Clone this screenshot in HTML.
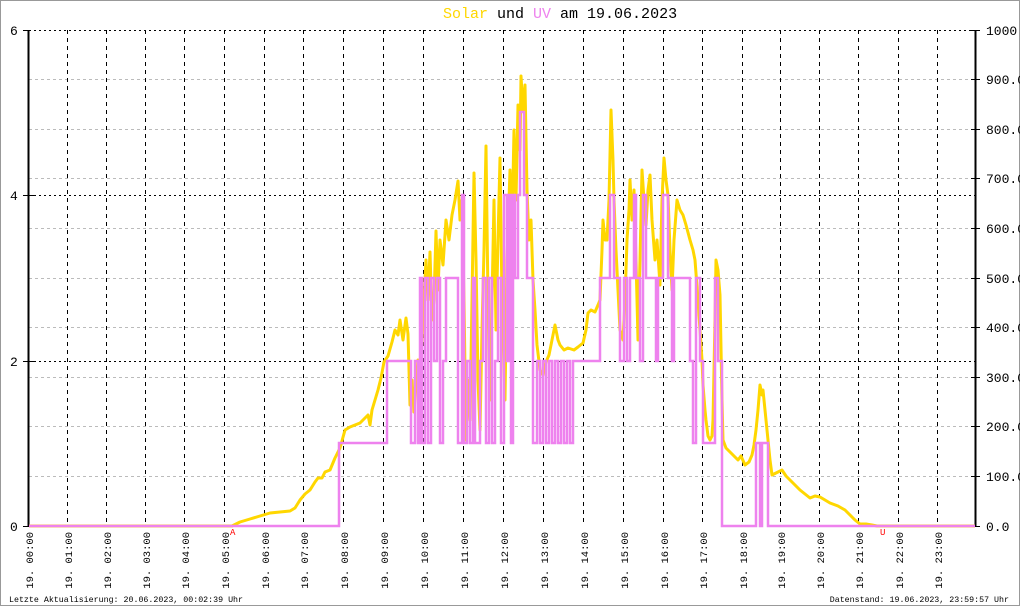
<!DOCTYPE html>
<html><head><meta charset="utf-8"><style>
html,body{margin:0;padding:0;background:#fff;}
svg{display:block;}
text{font-family:"Liberation Mono","DejaVu Sans Mono",monospace;}
</style></head><body>
<svg width="1020" height="606" viewBox="0 0 1020 606" xmlns="http://www.w3.org/2000/svg">
<rect x="0.5" y="0.5" width="1019" height="605" fill="#fff" stroke="#999"/>
<text x="443" y="18" font-size="15"><tspan fill="#ffd700">Solar</tspan><tspan fill="#000"> und </tspan><tspan fill="#ee82ee">UV</tspan><tspan fill="#000"> am 19.06.2023</tspan></text>
<g stroke="#bbb" stroke-width="1" stroke-dasharray="3,3">
<line x1="29" x2="975" y1="476.5" y2="476.5"/><line x1="29" x2="975" y1="426.5" y2="426.5"/>
<line x1="29" x2="975" y1="377.5" y2="377.5"/><line x1="29" x2="975" y1="327.5" y2="327.5"/>
<line x1="29" x2="975" y1="278.5" y2="278.5"/><line x1="29" x2="975" y1="228.5" y2="228.5"/>
<line x1="29" x2="975" y1="178.5" y2="178.5"/><line x1="29" x2="975" y1="129.5" y2="129.5"/>
<line x1="29" x2="975" y1="79.5" y2="79.5"/>
</g>
<g stroke="#000" stroke-width="1" stroke-dasharray="2,3">
<line x1="29" x2="975" y1="30.5" y2="30.5"/><line x1="29" x2="975" y1="195.5" y2="195.5"/><line x1="29" x2="975" y1="361.5" y2="361.5"/>
</g>
<g stroke="#000" stroke-width="1" stroke-dasharray="4,4" id="vg"></g>
<g stroke="#000" stroke-width="1" stroke-dasharray="4,4">
<line x1="67.5" x2="67.5" y1="30" y2="526"/><line x1="106.5" x2="106.5" y1="30" y2="526"/><line x1="145.5" x2="145.5" y1="30" y2="526"/><line x1="184.5" x2="184.5" y1="30" y2="526"/><line x1="224.5" x2="224.5" y1="30" y2="526"/><line x1="264.5" x2="264.5" y1="30" y2="526"/><line x1="303.5" x2="303.5" y1="30" y2="526"/><line x1="343.5" x2="343.5" y1="30" y2="526"/><line x1="383.5" x2="383.5" y1="30" y2="526"/><line x1="423.5" x2="423.5" y1="30" y2="526"/><line x1="463.5" x2="463.5" y1="30" y2="526"/><line x1="503.5" x2="503.5" y1="30" y2="526"/><line x1="543.5" x2="543.5" y1="30" y2="526"/><line x1="583.5" x2="583.5" y1="30" y2="526"/><line x1="623.5" x2="623.5" y1="30" y2="526"/><line x1="663.5" x2="663.5" y1="30" y2="526"/><line x1="702.5" x2="702.5" y1="30" y2="526"/><line x1="742.5" x2="742.5" y1="30" y2="526"/><line x1="780.5" x2="780.5" y1="30" y2="526"/><line x1="819.5" x2="819.5" y1="30" y2="526"/><line x1="858.5" x2="858.5" y1="30" y2="526"/><line x1="898.5" x2="898.5" y1="30" y2="526"/><line x1="937.5" x2="937.5" y1="30" y2="526"/>
</g>
<g stroke="#000" stroke-width="2">
<line x1="28.5" x2="28.5" y1="30" y2="527"/><line x1="975.5" x2="975.5" y1="30" y2="527"/>
</g>
<g stroke="#000" stroke-width="1">
<line x1="23" x2="29" y1="30.5" y2="30.5"/><line x1="23" x2="34" y1="195.5" y2="195.5"/><line x1="23" x2="34" y1="361.5" y2="361.5"/><line x1="23" x2="29" y1="526.5" y2="526.5"/>
<line x1="971" x2="980" y1="30.5" y2="30.5"/><line x1="971" x2="980" y1="79.5" y2="79.5"/><line x1="971" x2="980" y1="129.5" y2="129.5"/><line x1="971" x2="980" y1="178.5" y2="178.5"/><line x1="971" x2="980" y1="228.5" y2="228.5"/><line x1="971" x2="980" y1="278.5" y2="278.5"/><line x1="971" x2="980" y1="327.5" y2="327.5"/><line x1="971" x2="980" y1="377.5" y2="377.5"/><line x1="971" x2="980" y1="426.5" y2="426.5"/><line x1="971" x2="980" y1="476.5" y2="476.5"/><line x1="971" x2="980" y1="526.5" y2="526.5"/>
</g>
<g font-size="13" fill="#000">
<text x="10" y="35">6</text><text x="10" y="200">4</text><text x="10" y="366">2</text><text x="10" y="531">0</text>
<text x="986" y="35">1000.0</text><text x="986" y="84">900.0</text><text x="986" y="134">800.0</text><text x="986" y="183">700.0</text><text x="986" y="233">600.0</text><text x="986" y="283">500.0</text><text x="986" y="332">400.0</text><text x="986" y="382">300.0</text><text x="986" y="431">200.0</text><text x="986" y="481">100.0</text><text x="986" y="531">0.0</text>
</g>
<polyline fill="none" stroke="#ffd700" stroke-width="3" stroke-linejoin="round" points="29,526 232,526 240,522 250,519 260,516 270,513 280,512 290,511 295,508 300,500 305,494 310,490 315,482 318,478 322,478 325,472 330,470 335,458 340,448 345,430 350,427 355,425 360,423 365,418 368,415 370,425 372,410 375,400 378,390 381,378 384,362 388,356 392,342 395,330 398,335 400,320 403,340 406,318 408,334 410,405 412,380 414,412 416,385 418,360 420,370 422,340 424,300 426,260 428,300 430,252 432,320 434,300 436,231 438,290 440,240 443,265 446,220 449,240 452,215 455,200 458,181 460,220 462,200 464,300 466,440 468,380 470,420 472,300 474,173 476,260 478,380 480,430 482,330 484,250 486,146 488,300 490,400 492,300 494,200 496,330 498,240 500,158 502,300 505,400 507,260 510,170 512,230 514,130 516,200 518,105 520,150 521,76 523,110 525,85 527,190 529,240 531,220 533,280 535,310 537,345 540,370 543,375 546,362 549,355 552,340 555,325 558,340 560,345 564,350 568,348 574,350 578,347 583,343 586,330 588,313 591,310 595,312 598,305 600,300 602,250 603,220 605,240 607,240 609,200 611,110 613,160 614,200 616,250 617,270 620,330 623,340 625,300 627,240 629,210 630,180 632,220 634,190 636,260 638,340 640,260 642,170 644,200 646,225 648,190 650,175 652,220 655,260 657,240 660,285 662,200 664,158 666,180 668,195 670,250 672,290 674,240 677,200 680,210 683,215 686,225 690,240 693,250 695,260 698,300 700,330 702,360 703,385 705,410 706,420 708,436 710,440 712,436 713,420 715,320 716,260 718,270 720,295 722,400 723,440 726,448 728,450 733,455 738,460 741,456 745,465 749,462 752,455 754,445 756,430 758,410 760,385 762,395 763,390 765,410 767,430 770,460 772,475 776,473 782,470 786,476 790,480 795,485 800,490 805,494 810,498 815,496 820,497 825,500 830,503 838,506 845,510 850,515 855,520 860,524 866,524 872,525 877,526 975,526"/>
<path fill="none" stroke="#ee82ee" stroke-width="2.5" d="M29 526 H339 V443 H387 V361 H411 V443 H415 V361 H418 V443 H420 V278 H422 V443 H425 V278 H428 V443 H431 V278 H434 V361 H437 V278 H440 V443 H443 V361 H446 V278 H455 V278 H458 V443 H462 V195 H464 V443 H467 V361 H470 V443 H473 V278 H475 V443 H480 V361 H483 V278 H486 V443 H489 V278 H492 V443 H495 V361 H498 V278 H501 V443 H504 V195 H507 V361 H509 V195 H511 V443 H513 V195 H515 V278 H518 V195 H520 V112 H524 V195 H527 V278 H533 V443 H537 V361 H540 V443 H543 V361 H546 V443 H549 V361 H552 V443 H555 V361 H558 V443 H561 V361 H564 V443 H567 V361 H570 V443 H573 V361 H600 V278 H610 V195 H614 V278 H620 V361 H624 V278 H627 V361 H630 V278 H634 V195 H636 V278 H640 V361 H643 V195 H646 V278 H656 V361 H658 V278 H663 V195 H668 V278 H672 V361 H674 V278 H690 V361 H693 V443 H696 V278 H700 V361 H703 V443 H715 V278 H718 V361 H722 V526 H756 V443 H760 V526 H762 V443 H768 V526 H975"/>
<text x="230" y="535" font-size="9" fill="#f00">A</text>
<text x="880" y="535" font-size="9" fill="#f00">U</text>
<g font-size="10.5" fill="#000" text-anchor="end">
<text transform="translate(33,532) rotate(-90)">19. 00:00</text>
<text transform="translate(72,532) rotate(-90)">19. 01:00</text>
<text transform="translate(111,532) rotate(-90)">19. 02:00</text>
<text transform="translate(150,532) rotate(-90)">19. 03:00</text>
<text transform="translate(189,532) rotate(-90)">19. 04:00</text>
<text transform="translate(229,532) rotate(-90)">19. 05:00</text>
<text transform="translate(269,532) rotate(-90)">19. 06:00</text>
<text transform="translate(308,532) rotate(-90)">19. 07:00</text>
<text transform="translate(348,532) rotate(-90)">19. 08:00</text>
<text transform="translate(388,532) rotate(-90)">19. 09:00</text>
<text transform="translate(428,532) rotate(-90)">19. 10:00</text>
<text transform="translate(468,532) rotate(-90)">19. 11:00</text>
<text transform="translate(508,532) rotate(-90)">19. 12:00</text>
<text transform="translate(548,532) rotate(-90)">19. 13:00</text>
<text transform="translate(588,532) rotate(-90)">19. 14:00</text>
<text transform="translate(628,532) rotate(-90)">19. 15:00</text>
<text transform="translate(668,532) rotate(-90)">19. 16:00</text>
<text transform="translate(707,532) rotate(-90)">19. 17:00</text>
<text transform="translate(747,532) rotate(-90)">19. 18:00</text>
<text transform="translate(785,532) rotate(-90)">19. 19:00</text>
<text transform="translate(824,532) rotate(-90)">19. 20:00</text>
<text transform="translate(863,532) rotate(-90)">19. 21:00</text>
<text transform="translate(903,532) rotate(-90)">19. 22:00</text>
<text transform="translate(942,532) rotate(-90)">19. 23:00</text>
</g>
<text x="9" y="602" font-size="8.3" fill="#000">Letzte Aktualisierung: 20.06.2023, 00:02:39 Uhr</text>
<text x="1009" y="602" font-size="8.3" fill="#000" text-anchor="end">Datenstand: 19.06.2023, 23:59:57 Uhr</text>
</svg>
</body></html>
